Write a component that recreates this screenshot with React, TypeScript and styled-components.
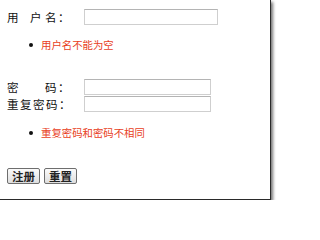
import React from 'react';
import styled, { createGlobalStyle } from 'styled-components';

const GlobalStyle = createGlobalStyle`
  html, body {
    margin: 0;
    padding: 0;
    background: #fff;
  }
`;

const App = () => {
  return (
    <>
      <GlobalStyle />
      <Frame>
        <Row>
          <Label>
            用<Gap w={10} />户<Gap w={2} />名：
          </Label>
          <Field type="text" w={134} />
        </Row>
        <ErrorList top={13}>
          <ErrorItem>用户名不能为空</ErrorItem>
        </ErrorList>
        <Row top={27}>
          <Label>
            密<Gap w={25} />码：
          </Label>
          <Field type="password" w={127} />
        </Row>
        <Row top={1}>
          <Label>重复密码：</Label>
          <Field type="password" w={127} />
        </Row>
        <ErrorList top={14}>
          <ErrorItem>重复密码和密码不相同</ErrorItem>
        </ErrorList>
        <Actions>
          <Button type="button">注册</Button>
          <Button type="button">重置</Button>
        </Actions>
      </Frame>
    </>
  );
};

const Frame = styled.div`
  box-sizing: border-box;
  width: 271px;
  height: 200px;
  padding: 9px 0 0 7px;
  display: flex;
  flex-direction: column;
  background: #fff;
  border-right: 1px solid #2a2a2a;
  border-bottom: 1px solid #2a2a2a;
  box-shadow: 2px 2px 3px rgba(0, 0, 0, 0.55);
  font-family: 'Noto Sans CJK SC', 'Noto Sans', sans-serif;
`;

const Row = styled.div<{ top?: number }>`
  display: grid;
  grid-template-columns: 77px auto;
  align-items: center;
  height: 16px;
  margin-top: ${(p) => p.top || 0}px;
`;

const Label = styled.span`
  display: flex;
  align-items: center;
  font-size: 11.5px;
  letter-spacing: 1.5px;
  line-height: 16px;
  color: #111;
  white-space: nowrap;
`;

const Gap = styled.span<{ w: number }>`
  display: inline-block;
  width: ${(p) => p.w}px;
`;

const Field = styled.input<{ w: number }>`
  box-sizing: border-box;
  width: ${(p) => p.w}px;
  height: 16px;
  margin: 0;
  padding: 0 2px;
  border: 1px solid #cfcfcf;
  border-top-color: #b4b4b4;
  background: #fff;
  outline: none;
`;

const ErrorList = styled.ul<{ top: number }>`
  list-style: none;
  margin: ${(p) => p.top}px 0 0;
  padding: 0 0 0 34px;
`;

const ErrorItem = styled.li`
  position: relative;
  font-size: 10.4px;
  line-height: 14px;
  color: #e8401c;
  white-space: nowrap;

  &::before {
    content: '';
    position: absolute;
    left: -12px;
    top: 5px;
    width: 4px;
    height: 4px;
    border-radius: 50%;
    background: #111;
  }
`;

const Actions = styled.div`
  display: flex;
  gap: 4px;
  margin-top: 28px;
`;

const Button = styled.button`
  box-sizing: border-box;
  height: 16px;
  width: 33px;
  margin: 0;
  padding: 0;
  border: 1px solid #6e6e6e;
  border-radius: 2px;
  background: linear-gradient(#fbfbfb, #dedede);
  font-family: 'Noto Sans CJK SC', sans-serif;
  font-size: 11.5px;
  font-weight: 700;
  line-height: 14px;
  color: #222;
`;

export default App;
